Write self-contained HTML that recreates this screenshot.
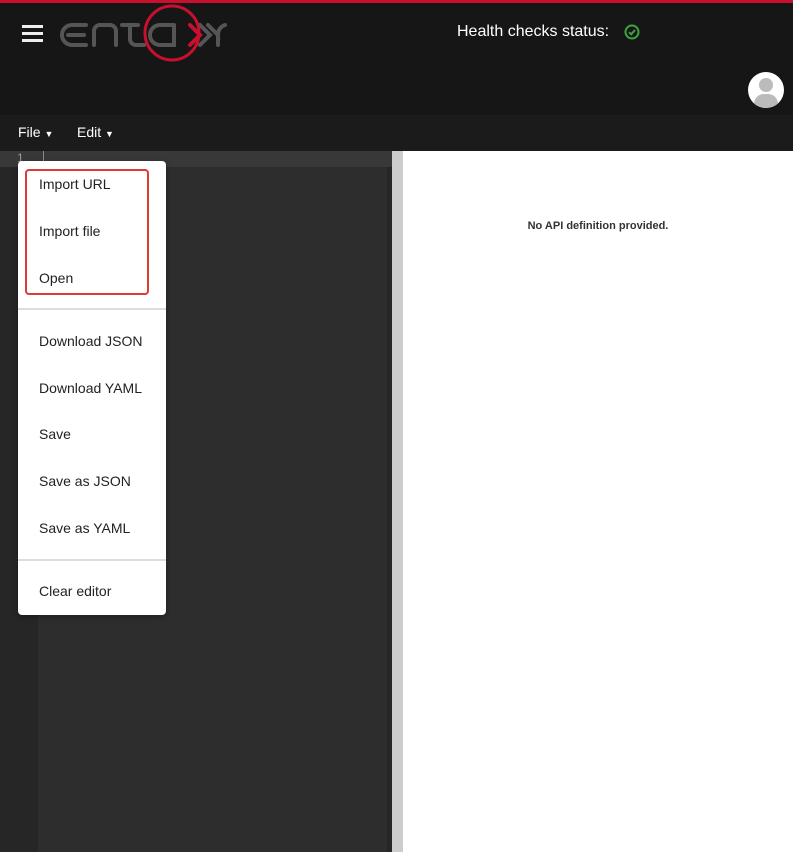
<!DOCTYPE html>
<html><head><style>
body{margin:0;width:793px;height:852px;overflow:hidden;background:#fff;font-family:"Liberation Sans",Arial,sans-serif;position:relative}
div{box-sizing:border-box}
.a{position:absolute}
.item{position:absolute;left:21px;font-size:14px;color:#222}
</style></head><body>
<div class="a" style="left:0;top:0;width:793px;height:3px;background:#c8102e"></div>
<div class="a" style="left:0;top:3px;width:793px;height:112px;background:#161616"></div>
<div class="a" style="left:22px;top:25px;width:21px;height:3px;background:#eee"></div>
<div class="a" style="left:22px;top:32px;width:21px;height:3px;background:#eee"></div>
<div class="a" style="left:22px;top:39px;width:21px;height:3px;background:#eee"></div>
<svg class="a" style="left:60px;top:3px" width="180" height="62" viewBox="0 0 180 62">
<g fill="none" stroke="#555" stroke-width="4" stroke-linecap="round">
<path d="M26 22 H12 a8 8 0 0 0 0 20 H26 M8 32 H24"/>
<path d="M34 42 V28 a6 6 0 0 1 6 -6 H50 a6 6 0 0 1 6 6 V42"/>
<path d="M62 22 H78 M70 22 V36 a6 6 0 0 0 6 6 H84"/>
<path d="M114 22 H100 a10 10 0 0 0 0 20 H114 V22"/>
<path d="M140 22 L150 32 L140 42"/>
<path d="M148 22 L158 32 a10 10 0 0 1 7 -10 M158 32 V42"/>
</g>
<circle cx="112" cy="30" r="27" fill="none" stroke="#c8102e" stroke-width="3"/>
<path d="M130 22 L140 32 L130 42" fill="none" stroke="#c8102e" stroke-width="4" stroke-linecap="round"/>
</svg>
<div class="a" style="left:457px;top:23px;color:#fff;font-size:16px">Health checks status:</div>
<svg class="a" style="left:624px;top:24px" width="16" height="16" viewBox="0 0 16 16"><circle cx="8" cy="8" r="6.5" fill="none" stroke="#3ea53e" stroke-width="2"/><path d="M5 8.2 L7.2 10.3 L11 6" fill="none" stroke="#3ea53e" stroke-width="2"/></svg>
<div class="a" style="left:748px;top:72px;width:36px;height:36px;border-radius:50%;background:#fff;overflow:hidden">
<div class="a" style="left:11px;top:6px;width:14px;height:14px;border-radius:50%;background:#bbb"></div>
<div class="a" style="left:6px;top:22px;width:24px;height:20px;border-radius:10px 10px 0 0;background:#bbb"></div></div>
<div class="a" style="left:0;top:115px;width:793px;height:36px;background:#1b1b1b"></div>
<div class="a" style="left:18px;top:124px;color:#fff;font-size:14px">File <span style="font-size:9px">▼</span></div>
<div class="a" style="left:77px;top:124px;color:#fff;font-size:14px">Edit <span style="font-size:9px">▼</span></div>
<div class="a" style="left:0;top:151px;width:392px;height:701px;background:#2d2d2d"></div>
<div class="a" style="left:0;top:151px;width:38px;height:701px;background:#262626"></div>
<div class="a" style="left:0;top:151px;width:392px;height:16px;background:#383838"></div>
<div class="a" style="left:43px;top:151px;width:1px;height:16px;background:#888"></div>
<div class="a" style="left:17px;top:151px;color:#999;font-size:12px">1</div>
<div class="a" style="left:387px;top:167px;width:5px;height:685px;background:#262626"></div>
<div class="a" style="left:392px;top:151px;width:11px;height:701px;background:#ccc"></div>
<div class="a" style="left:403px;top:220px;width:390px;text-align:center;font-size:11px;font-weight:bold;color:#333">No API definition provided.</div>
<div class="a" style="left:18px;top:161px;width:148px;height:454px;background:#fff;border-radius:4px;box-shadow:0 2px 6px rgba(0,0,0,.3)">
<div class="a" style="left:7px;top:8px;width:124px;height:126px;border:2px solid #e03a33;border-radius:4px"></div>
<div class="item" style="top:15px">Import URL</div>
<div class="item" style="top:62px">Import file</div>
<div class="item" style="top:109px">Open</div>
<div class="a" style="left:0;top:147px;width:148px;height:2px;background:#ddd"></div>
<div class="item" style="top:172px">Download JSON</div>
<div class="item" style="top:219px">Download YAML</div>
<div class="item" style="top:265px">Save</div>
<div class="item" style="top:312px">Save as JSON</div>
<div class="item" style="top:359px">Save as YAML</div>
<div class="a" style="left:0;top:398px;width:148px;height:2px;background:#ddd"></div>
<div class="item" style="top:422px">Clear editor</div>
</div>
</body></html>
